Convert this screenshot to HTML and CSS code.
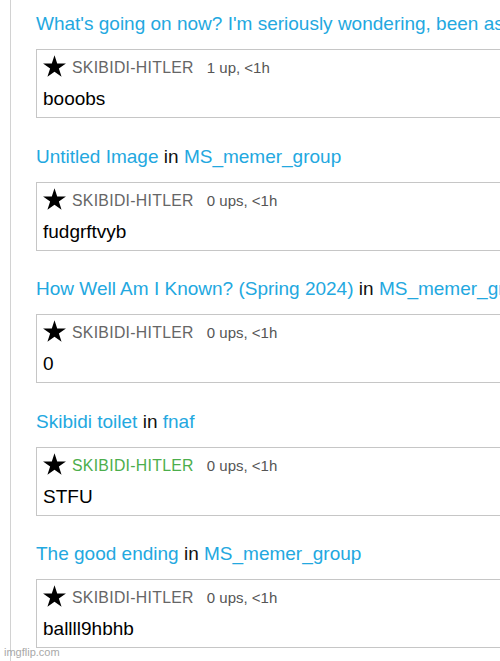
FILE: index.html
```html
<!DOCTYPE html>
<html>
<head>
<meta charset="utf-8">
<link rel="stylesheet" href="styles.css">
</head>
<body>
<div class="page">
  <div class="item">
    <div class="title"><a class="link">What's going on now? I'm seriously wondering, been asking</a></div>
    <div class="comment">
      <div class="head">
        <svg class="star" viewBox="1 1.1 22 20.8"><polygon points="12,1.1 14.58,9.05 22.94,9.05 16.18,13.96 18.76,21.9 12,16.99 5.24,21.9 7.82,13.96 1.06,9.05 9.42,9.05"/></svg>
        <span class="user">SKIBIDI-HITLER</span>
        <span class="meta">1 up, &lt;1h</span>
      </div>
      <div class="text">booobs</div>
    </div>
  </div>
  <div class="item">
    <div class="title"><a class="link">Untitled Image</a> in <a class="link">MS_memer_group</a></div>
    <div class="comment">
      <div class="head">
        <svg class="star" viewBox="1 1.1 22 20.8"><polygon points="12,1.1 14.58,9.05 22.94,9.05 16.18,13.96 18.76,21.9 12,16.99 5.24,21.9 7.82,13.96 1.06,9.05 9.42,9.05"/></svg>
        <span class="user">SKIBIDI-HITLER</span>
        <span class="meta">0 ups, &lt;1h</span>
      </div>
      <div class="text">fudgrftvyb</div>
    </div>
  </div>
  <div class="item">
    <div class="title"><a class="link">How Well Am I Known? (Spring 2024)</a> in <a class="link">MS_memer_group</a></div>
    <div class="comment">
      <div class="head">
        <svg class="star" viewBox="1 1.1 22 20.8"><polygon points="12,1.1 14.58,9.05 22.94,9.05 16.18,13.96 18.76,21.9 12,16.99 5.24,21.9 7.82,13.96 1.06,9.05 9.42,9.05"/></svg>
        <span class="user">SKIBIDI-HITLER</span>
        <span class="meta">0 ups, &lt;1h</span>
      </div>
      <div class="text">0</div>
    </div>
  </div>
  <div class="item">
    <div class="title"><a class="link">Skibidi toilet</a> in <a class="link">fnaf</a></div>
    <div class="comment">
      <div class="head">
        <svg class="star" viewBox="1 1.1 22 20.8"><polygon points="12,1.1 14.58,9.05 22.94,9.05 16.18,13.96 18.76,21.9 12,16.99 5.24,21.9 7.82,13.96 1.06,9.05 9.42,9.05"/></svg>
        <span class="user green">SKIBIDI-HITLER</span>
        <span class="meta">0 ups, &lt;1h</span>
      </div>
      <div class="text">STFU</div>
    </div>
  </div>
  <div class="item">
    <div class="title"><a class="link">The good ending</a> in <a class="link">MS_memer_group</a></div>
    <div class="comment">
      <div class="head">
        <svg class="star" viewBox="1 1.1 22 20.8"><polygon points="12,1.1 14.58,9.05 22.94,9.05 16.18,13.96 18.76,21.9 12,16.99 5.24,21.9 7.82,13.96 1.06,9.05 9.42,9.05"/></svg>
        <span class="user">SKIBIDI-HITLER</span>
        <span class="meta">0 ups, &lt;1h</span>
      </div>
      <div class="text">ballll9hbhb</div>
    </div>
  </div>
</div>
<div class="watermark">imgflip.com</div>
</body>
</html>
```
FILE: styles.css
```css
html, body {
  margin: 0;
  padding: 0;
  background: #fff;
  overflow: hidden;
  width: 500px;
  height: 661px;
}
body {
  font-family: "Liberation Sans", Arial, sans-serif;
  color: #111;
  position: relative;
}
.page {
  margin-left: 10px;
  border-left: 1px solid #d2d2d2;
  padding: 13px 0 0 25px;
  height: 661px;
  box-sizing: border-box;
  display: flex;
  flex-direction: column;
  gap: 27.6px;
}
.item {
  display: flex;
  flex-direction: column;
  gap: 14px;
}
.title {
  font-size: 19px;
  line-height: 22px;
  white-space: nowrap;
  color: #111;
}
.link {
  color: #23a8df;
  text-decoration: none;
}
.comment {
  width: 520px;
  border: 1px solid #c6c6c6;
  padding: 5px 6px 6px 6px;
  box-sizing: border-box;
}
.head {
  display: flex;
  align-items: flex-end;
  height: 22px;
}
.star {
  width: 23px;
  height: 22px;
  fill: #000;
  flex: none;
}
.user {
  margin-left: 6px;
  font-size: 15.8px;
  line-height: 18px;
  letter-spacing: 0.3px;
  color: #666;
}
.user.green {
  color: #4cae4c;
}
.meta {
  margin-left: 13px;
  font-size: 15px;
  line-height: 19px;
  color: #555;
}
.text {
  margin-top: 10px;
  font-size: 19px;
  line-height: 24px;
  color: #000;
}
.watermark {
  position: absolute;
  left: 4px;
  top: 645px;
  font-size: 11px;
  line-height: 14px;
  color: #a8a8a8;
}
```
